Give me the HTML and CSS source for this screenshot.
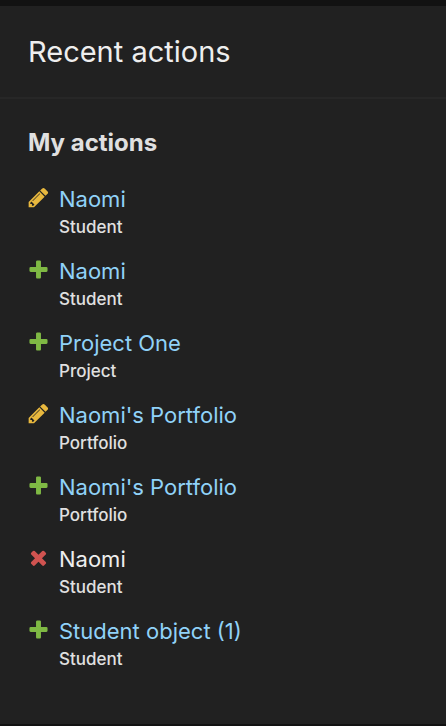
FILE: index.html
```html
<!DOCTYPE html>
<html lang="en">
<head>
<meta charset="utf-8">
<meta name="viewport" content="width=device-width, initial-scale=1">
<title>Recent actions</title>
<link rel="stylesheet" href="styles.css">
</head>
<body>
<svg class="sprite" aria-hidden="true">
  <symbol id="change" viewBox="0 0 1792 1792"><path d="M491 1536l91-91-235-235-91 91v107h128v128h107zm523-928q0-22-22-22-10 0-17 7l-542 542q-7 7-7 17 0 22 22 22 10 0 17-7l542-542q7-7 7-17zm-54-192l416 416-832 832h-416v-416zm683 96q0 53-37 90l-166 166-416-416 166-165q36-38 90-38 53 0 91 38l235 234q37 39 37 91z"/></symbol>
  <symbol id="add" viewBox="0 0 1792 1792"><path d="M1600 796v192q0 40-28 68t-68 28h-416v416q0 40-28 68t-68 28h-192q-40 0-68-28t-28-68v-416h-416q-40 0-68-28t-28-68v-192q0-40 28-68t68-28h416v-416q0-40 28-68t68-28h192q40 0 68 28t28 68v416h416q40 0 68 28t28 68z"/></symbol>
  <symbol id="delete" viewBox="0 0 1792 1792"><path d="M1490 1322q0 40-28 68l-136 136q-28 28-68 28t-68-28l-294-294-294 294q-28 28-68 28t-68-28l-136-136q-28-28-28-68t28-68l294-294-294-294q-28-28-28-68t28-68l136-136q28-28 68-28t68 28l294 294 294-294q28-28 68-28t68 28l136 136q28 28 28 68t-28 68l-294 294 294 294q28 28 28 68z"/></symbol>
</svg>
<aside class="module">
  <h2 class="title">Recent actions</h2>
  <section class="content">
    <h3 class="subtitle">My actions</h3>
    <ul class="actions">
      <li class="action"><svg class="icon icon-change" aria-hidden="true"><use href="#change"/></svg><div><a class="name" href="#">Naomi</a><span class="kind">Student</span></div></li>
      <li class="action"><svg class="icon icon-add" aria-hidden="true"><use href="#add"/></svg><div><a class="name" href="#">Naomi</a><span class="kind">Student</span></div></li>
      <li class="action"><svg class="icon icon-add" aria-hidden="true"><use href="#add"/></svg><div><a class="name" href="#">Project One</a><span class="kind">Project</span></div></li>
      <li class="action"><svg class="icon icon-change" aria-hidden="true"><use href="#change"/></svg><div><a class="name" href="#">Naomi's Portfolio</a><span class="kind">Portfolio</span></div></li>
      <li class="action"><svg class="icon icon-add" aria-hidden="true"><use href="#add"/></svg><div><a class="name" href="#">Naomi's Portfolio</a><span class="kind">Portfolio</span></div></li>
      <li class="action"><svg class="icon icon-delete" aria-hidden="true"><use href="#delete"/></svg><div><span class="name">Naomi</span><span class="kind">Student</span></div></li>
      <li class="action"><svg class="icon icon-add" aria-hidden="true"><use href="#add"/></svg><div><a class="name" href="#">Student object (1)</a><span class="kind">Student</span></div></li>
    </ul>
  </section>
</aside>
</body>
</html>
```
FILE: styles.css
```css
* { box-sizing: border-box; }

body {
  margin: 0;
  min-height: 100vh;
  display: flex;
  flex-direction: column;
  background: #212121;
  border-top: 6px solid #121212;
  border-bottom: 2px solid #121212;
  color: #eeeeee;
  font-family: Inter, "Liberation Sans", sans-serif;
}

.sprite { display: none; }

.title {
  margin: 0;
  padding: 28px 28px 27px;
  border-bottom: 2px solid #272727;
  font-size: 29px;
  font-weight: 400;
  line-height: 36px;
}

.content { padding: 28px 28px 36px; }

.subtitle {
  margin: 0 0 26px;
  color: #e0e0e0;
  font-size: 24px;
  font-weight: 700;
  line-height: 32px;
}

.actions {
  display: grid;
  gap: 16px;
  margin: 0;
  padding: 0;
  list-style: none;
}

.action {
  display: flex;
  gap: 9px;
}

.icon {
  flex: none;
  width: 23px;
  height: 23px;
  margin: 1px 0 0 -1px;
}

.icon-change { fill: #e8b83e; }
.icon-add { fill: #7fb944; }
.icon-delete { fill: #d05350; }

.name {
  display: block;
  font-size: 22px;
  line-height: 28px;
  text-decoration: none;
}

a.name { color: #90d2f8; }

.kind {
  display: block;
  color: #e0e0e0;
  font-size: 17px;
  font-weight: 500;
  line-height: 28px;
}
```
